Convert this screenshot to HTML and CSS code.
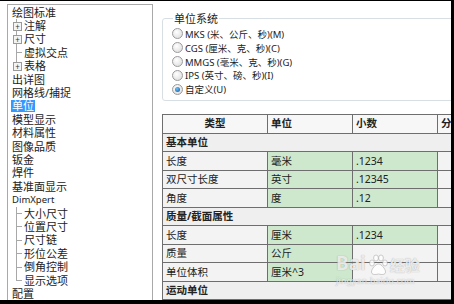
FILE: index.html
```html
<!DOCTYPE html>
<html lang="zh-CN">
<head>
    <meta charset="UTF-8">
    <title>文档属性 - 单位</title>
    <link rel="stylesheet" href="styles.css">
</head>
<body>
    <div class="window">
        <div class="tree">
            <div class="item">绘图标准</div>
            <div class="item child"><span class="twig"><span class="plus">+</span></span>注解</div>
            <div class="item child"><span class="twig"><span class="plus">+</span></span>尺寸</div>
            <div class="item child"><span class="twig"></span>虚拟交点</div>
            <div class="item child"><span class="twig last"><span class="plus">+</span></span>表格</div>
            <div class="item">出详图</div>
            <div class="item">网格线/捕捉</div>
            <div class="item"><span class="selected">单位</span></div>
            <div class="item">模型显示</div>
            <div class="item">材料属性</div>
            <div class="item">图像品质</div>
            <div class="item">钣金</div>
            <div class="item">焊件</div>
            <div class="item">基准面显示</div>
            <div class="item latin">DimXpert</div>
            <div class="item child"><span class="twig"></span>大小尺寸</div>
            <div class="item child"><span class="twig"></span>位置尺寸</div>
            <div class="item child"><span class="twig"></span>尺寸链</div>
            <div class="item child"><span class="twig"></span>形位公差</div>
            <div class="item child"><span class="twig"></span>倒角控制</div>
            <div class="item child"><span class="twig last"></span>显示选项</div>
            <div class="item">配置</div>
        </div>

        <div class="content">
            <fieldset class="group">
                <legend>单位系统</legend>
                <label class="radio"><span class="dot"></span>MKS (米、公斤、秒)(M)</label>
                <label class="radio"><span class="dot"></span>CGS (厘米、克、秒)(C)</label>
                <label class="radio"><span class="dot"></span>MMGS (毫米、克、秒)(G)</label>
                <label class="radio"><span class="dot"></span>IPS (英寸、磅、秒)(I)</label>
                <label class="radio"><span class="dot on"></span>自定义(U)</label>
            </fieldset>

            <table class="units">
                <colgroup>
                    <col style="width:105px">
                    <col style="width:85px">
                    <col style="width:85px">
                    <col style="width:90px">
                </colgroup>
                <tr class="head">
                    <th class="center">类型</th>
                    <th>单位</th>
                    <th>小数</th>
                    <th>分</th>
                </tr>
                <tr class="section"><td colspan="4">基本单位</td></tr>
                <tr><td>长度</td><td class="edit">毫米</td><td class="edit">.1234</td><td></td></tr>
                <tr><td>双尺寸长度</td><td class="edit">英寸</td><td class="edit">.12345</td><td></td></tr>
                <tr><td>角度</td><td class="edit">度</td><td class="edit">.12</td><td></td></tr>
                <tr class="section"><td colspan="4">质量/截面属性</td></tr>
                <tr><td>长度</td><td class="edit">厘米</td><td class="edit">.1234</td><td></td></tr>
                <tr><td>质量</td><td class="edit">公斤</td><td></td><td></td></tr>
                <tr><td>单位体积</td><td class="edit">厘米^3</td><td></td><td></td></tr>
                <tr class="section"><td colspan="4">运动单位</td></tr>
            </table>
        </div>
    </div>

    <!-- site watermark over the screenshot -->
    <div class="watermark">
        <div class="mark-top">
            <span>Bai</span>
            <svg width="22" height="22" viewBox="0 0 22 22">
                <g fill="rgba(255,255,255,0.8)" stroke="rgba(120,120,120,0.45)" stroke-width="0.8">
                    <ellipse cx="5" cy="9" rx="2.4" ry="3"/>
                    <ellipse cx="9" cy="4" rx="2.4" ry="3"/>
                    <ellipse cx="14" cy="4" rx="2.4" ry="3"/>
                    <ellipse cx="18" cy="9" rx="2.4" ry="3"/>
                    <path d="M11.5 10c-3 0-7 5-7 8 0 2.5 3 3 7 2 4 1 7 0.5 7-2 0-3-4-8-7-8z"/>
                </g>
            </svg>
            <span class="cn">经验</span>
        </div>
        <div class="mark-url">jingyan.baidu.com</div>
    </div>
</body>
</html>
```

FILE: styles.css
```css
body {
    margin: 0;
    background-color: #000;
    font-family: "Noto Sans", "Noto Sans CJK SC", sans-serif;
    font-size: 11px;
    color: #222;
}

.window {
    display: flex;
    width: 451px;
    height: 299px;
    margin-top: 1px;
    background-color: #fff;
    overflow: hidden;
}

/* left tree */
.tree {
    flex: 0 0 146px;
    margin: 3px 0 0 7px;
    padding: 1px 0 0 4px;
    box-sizing: border-box;
    height: 310px;
    border: 1px solid #a9a9a9;
    border-bottom: none;
}

.item {
    display: flex;
    align-items: center;
    height: 13.4px;
    line-height: 12px;
    white-space: nowrap;
}

.item.latin {
    font-size: 9.5px;
}

.selected {
    background-color: #3399ff;
    color: #fff;
    padding: 0 1px;
    margin-left: -1px;
}

.twig {
    flex: 0 0 12px;
    height: 100%;
    display: flex;
    align-items: center;
    background:
        linear-gradient(#a8a8a8, #a8a8a8) 4px 0 / 1px 100% no-repeat,
        linear-gradient(#a8a8a8, #a8a8a8) 4px 50% / 6px 1px no-repeat;
}

.twig.last {
    background:
        linear-gradient(#a8a8a8, #a8a8a8) 4px 0 / 1px 50% no-repeat,
        linear-gradient(#a8a8a8, #a8a8a8) 4px 50% / 6px 1px no-repeat;
}

.plus {
    width: 7px;
    height: 7px;
    margin-left: 1px;
    border: 1px solid #9a9a9a;
    background-color: #f4f4f4;
    font-size: 8px;
    line-height: 7px;
    text-align: center;
    color: #333;
}

/* right side */
.content {
    flex: 1;
    min-width: 0;
    padding: 10px 0 0 9px;
    overflow: hidden;
}

.group {
    width: 330px;
    margin: 0 0 13px 0;
    padding: 1px 0 4px 9px;
    border: 1px solid #d8dfe4;
    border-radius: 3px;
}

.group legend {
    padding: 0 1px;
    margin-left: 1px;
    line-height: 15px;
}

.radio {
    display: flex;
    align-items: center;
    height: 13.8px;
    font-size: 9.5px;
    white-space: nowrap;
}

.dot {
    width: 9px;
    height: 9px;
    margin-right: 2px;
    border: 1px solid #9b9b9b;
    border-radius: 50%;
    background: radial-gradient(circle at 40% 35%, #fff, #d8d8d8);
    display: flex;
    align-items: center;
    justify-content: center;
}

.dot.on::after {
    content: "";
    width: 5px;
    height: 5px;
    border-radius: 50%;
    background: radial-gradient(circle at 40% 35%, #6fc3ff, #0d4f8f);
}

.units {
    border-collapse: collapse;
    table-layout: fixed;
    width: 365px;
}

.units th,
.units td {
    height: 17.5px;
    padding: 0 3px;
    border: 1px solid #6e6e6e;
    text-align: left;
    white-space: nowrap;
    overflow: hidden;
    background-color: #f3f3f3;
    font-size: 10.5px;
    line-height: 13px;
}

.units th {
    height: 18px;
    font-weight: bold;
    background-color: #f7f7f7;
}

.units th.center {
    text-align: center;
}

.units .section td {
    font-weight: bold;
    background-color: #efefef;
}

.units td.edit {
    background-color: #cde8cd;
}

/* watermark */
.watermark {
    position: absolute;
    left: 336px;
    top: 250px;
    color: rgba(255, 255, 255, 0.8);
    text-shadow: 0 0 1px rgba(100, 100, 100, 0.6);
    pointer-events: none;
}

.mark-top {
    display: flex;
    align-items: flex-end;
    gap: 1px;
    font-size: 19px;
    font-weight: bold;
    line-height: 26px;
}

.mark-top .cn {
    font-size: 15px;
    line-height: 22px;
}

.mark-url {
    font-size: 8.5px;
    line-height: 10px;
    letter-spacing: 0.3px;
}
```
